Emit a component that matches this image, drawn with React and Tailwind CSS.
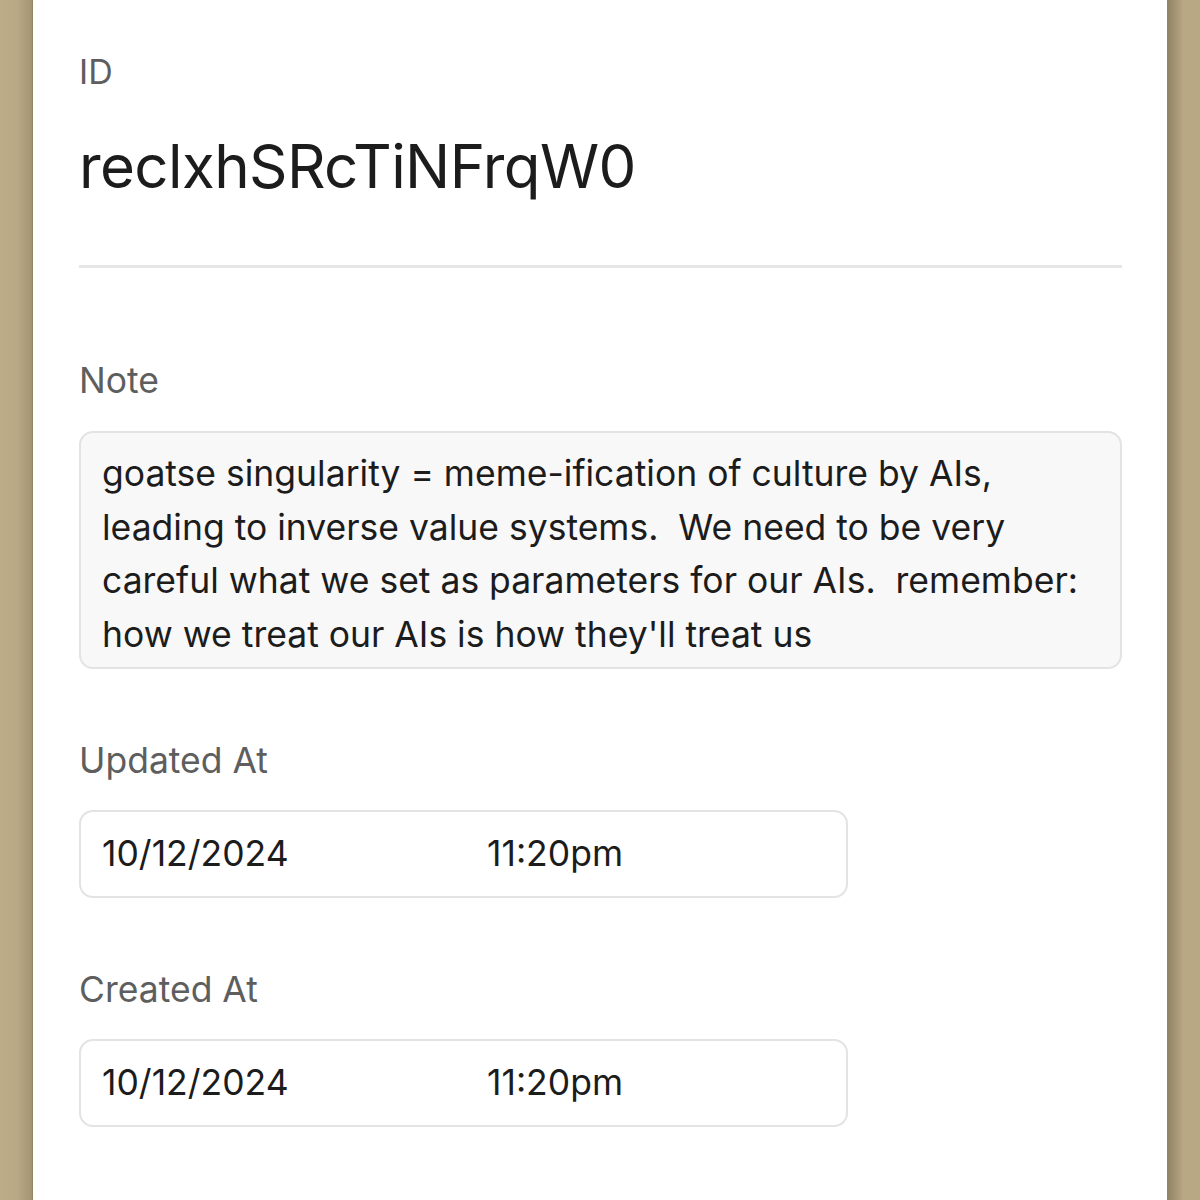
export default function App() {
  const font = { fontFamily: "Inter, 'Noto Sans', sans-serif" };
  const lines = [
    "goatse singularity = meme-ification of culture by AIs,",
    "leading to inverse value systems.\u00a0 We need to be very",
    "careful what we set as parameters for our AIs.\u00a0 remember:",
    "how we treat our AIs is how they'll treat us",
  ];

  return (
    <div style={font} className="w-[1200px] h-[1200px] overflow-hidden flex bg-[#b8a884]">
      <div className="w-[33px] shrink-0 bg-gradient-to-r from-[#bcac88] via-[#b9a985] to-[#a39371]" />
      <div className="w-[1134px] shrink-0 bg-white shadow-[0_0_2px_rgba(0,0,0,0.35)] pl-[46px] pr-[45px] pt-[52px]">
        <div className="text-[34px] leading-[40px] text-[#5e5e5e]">ID</div>
        <div className="mt-[36px] text-[60px] leading-[76px] text-[#1c1c1c] tracking-[-0.6px]">reclxhSRcTiNFrqW0</div>
        <div className="mt-[61px] h-[3px] bg-[#e6e6e6]" />

        <div className="mt-[93px] text-[35.5px] leading-[40px] text-[#5e5e5e]">Note</div>
        <div className="mt-[30px] h-[238px] rounded-[14px] border-2 border-[#e3e3e3] bg-[#f8f8f8] pl-[21px] pt-[14px] text-[35.5px] leading-[53.5px] text-[#1c1c1c]">
          {lines.map((l) => (
            <div key={l} className="whitespace-pre">{l}</div>
          ))}
        </div>

        <div className="mt-[72px] text-[35.5px] leading-[40px] text-[#5e5e5e]">Updated At</div>
        <DateBox />

        <div className="mt-[72px] text-[35.5px] leading-[40px] text-[#5e5e5e]">Created At</div>
        <DateBox />
      </div>
      <div className="w-[33px] shrink-0 bg-gradient-to-r from-[#8f8164] via-[#b8a884] to-[#b8a884]" />
    </div>
  );
}

function DateBox() {
  return (
    <div className="mt-[29px] w-[769px] h-[88px] rounded-[14px] border-2 border-[#e3e3e3] bg-white flex items-center pl-[21px] text-[35.5px] text-[#1c1c1c]">
      <span className="w-[385px]">10/12/2024</span>
      <span>11:20pm</span>
    </div>
  );
}
